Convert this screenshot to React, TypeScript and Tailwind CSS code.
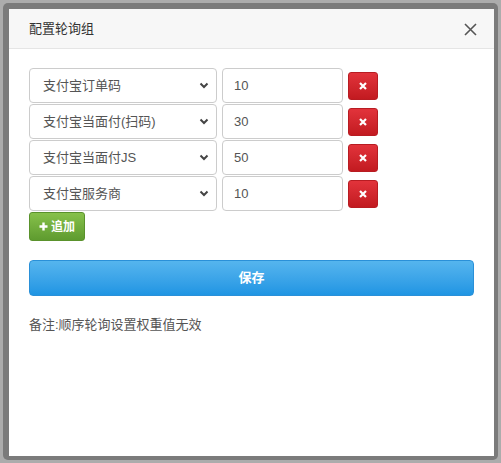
import React from 'react';

const rows = [
    { name: '支付宝订单码', weight: '10' },
    { name: '支付宝当面付(扫码)', weight: '30' },
    { name: '支付宝当面付JS', weight: '50' },
    { name: '支付宝服务商', weight: '10' },
];

const font = { fontFamily: '"Liberation Sans", "Noto Sans CJK SC", sans-serif' };

const App: React.FC = () => {
    return (
        <div className="w-[501px] h-[463px] bg-[#acacac] p-[3px]" style={font}>
            <div className="h-full bg-[#7b7b7b] rounded-[5px] pt-[6px] pl-[6px] pr-[4px] pb-[4px]">
                <div className="h-full bg-white flex flex-col">
                    {/* header */}
                    <div className="h-[40px] shrink-0 bg-[#f7f7f7] border-b border-[#e5e5e5] flex items-center justify-between pl-[20px] pr-[17px]">
                        <span className="text-[13px] text-[#333]">配置轮询组</span>
                        <svg width="13" height="13" viewBox="0 0 13 13" className="mt-[2px]">
                            <path d="M1 1L12 12M12 1L1 12" stroke="#555" strokeWidth="1.6" />
                        </svg>
                    </div>

                    <div className="pt-[19px] px-[20px]">
                        <div className="flex flex-col gap-[1px]">
                            {rows.map((r, i) => (
                                <div key={i} className="flex items-center gap-[5px]">
                                    <div className="w-[188px] h-[35px] border border-[#ccc] rounded-[4px] flex items-center justify-between pl-[13px] pr-[7px] text-[13px] text-[#555]">
                                        <span>{r.name}</span>
                                        <svg width="10" height="7" viewBox="0 0 10 7">
                                            <path d="M1.5 1.5L5 5L8.5 1.5" fill="none" stroke="#444" strokeWidth="2" />
                                        </svg>
                                    </div>
                                    <div className="w-[121px] h-[35px] border border-[#ccc] rounded-[4px] flex items-center pl-[11px] text-[13px] text-[#555]">
                                        {r.weight}
                                    </div>
                                    <button className="w-[30px] h-[28px] rounded-[3px] border border-[#b81c22] bg-gradient-to-b from-[#e2333b] to-[#c21a20] flex items-center justify-center">
                                        <svg width="8" height="8" viewBox="0 0 8 8">
                                            <path d="M1 1L7 7M7 1L1 7" stroke="#fff" strokeWidth="2.2" />
                                        </svg>
                                    </button>
                                </div>
                            ))}
                        </div>

                        <button className="mt-[1px] w-[56px] h-[29px] rounded-[3px] border border-[#5a922c] bg-gradient-to-b from-[#87c14b] to-[#5e9b2f] flex items-center justify-center gap-[3px] text-white text-[12px] font-bold">
                            <svg width="9" height="9" viewBox="0 0 9 9">
                                <path d="M4.5 0.5V8.5M0.5 4.5H8.5" stroke="#fff" strokeWidth="2.4" />
                            </svg>
                            <span>追加</span>
                        </button>

                        <button className="mt-[19px] w-full h-[36px] rounded-[4px] border border-[#2a90d8] bg-gradient-to-b from-[#55b5ee] to-[#1e95e3] text-white text-[13px] font-bold">
                            保存
                        </button>

                        <p className="mt-[19px] text-[13px] text-[#555]">备注:顺序轮询设置权重值无效</p>
                    </div>
                </div>
            </div>
        </div>
    );
};

export default App;
